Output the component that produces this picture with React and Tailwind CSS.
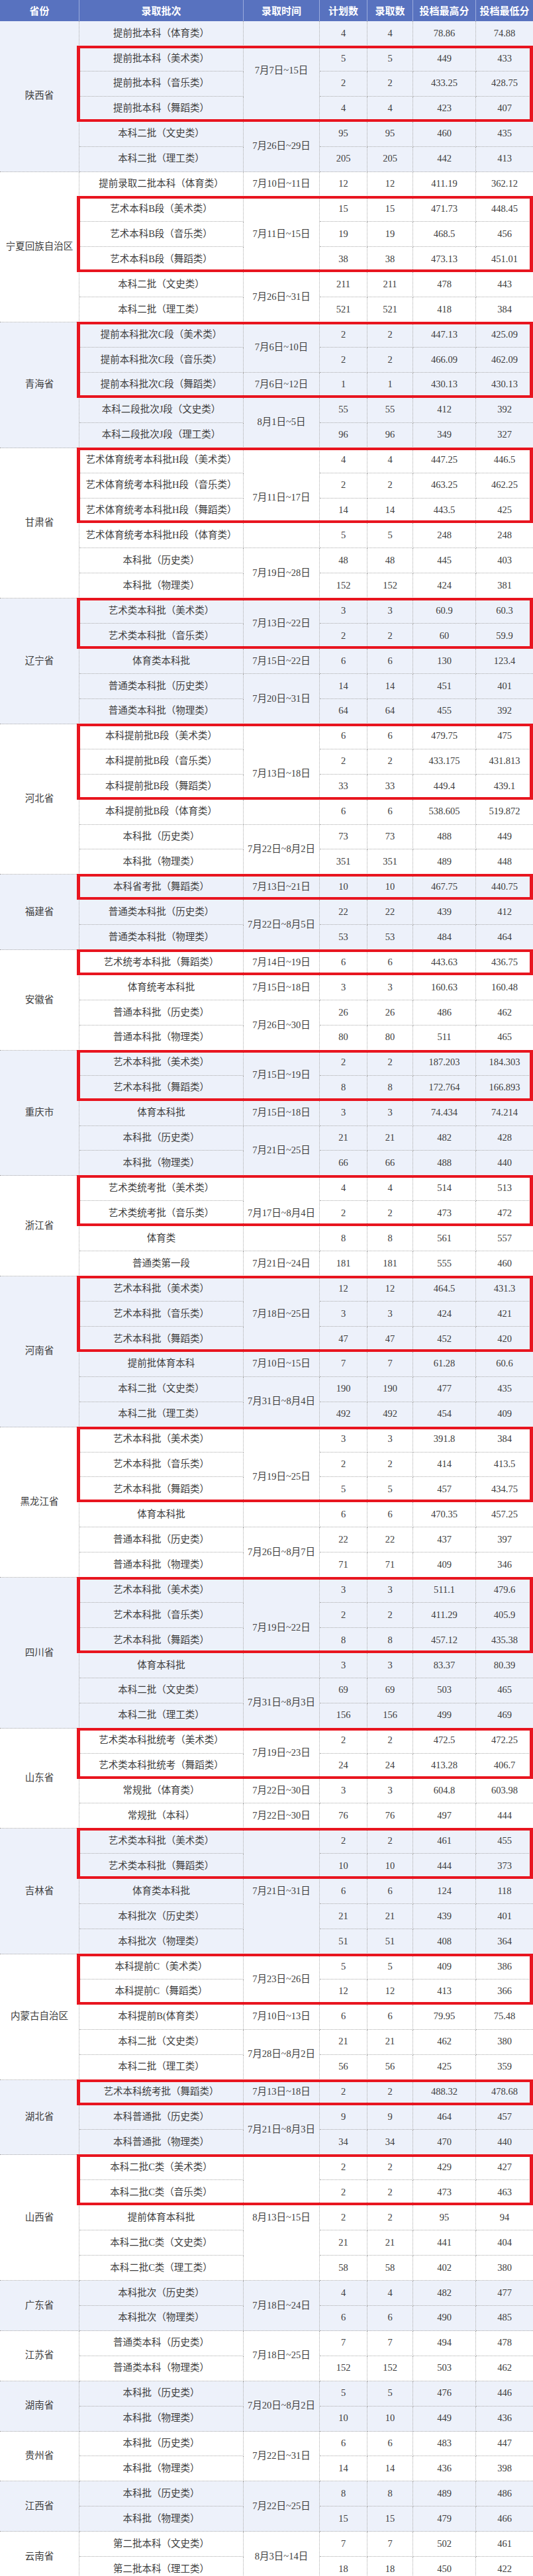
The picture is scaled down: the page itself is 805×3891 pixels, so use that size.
import React from 'react';

const groups = [
  {
    name: '陕西省',
    rows: [
      ['提前批本科（体育类）', '4', '4', '78.86', '74.88'],
      ['提前批本科（美术类）', '5', '5', '449', '433'],
      ['提前批本科（音乐类）', '2', '2', '433.25', '428.75'],
      ['提前批本科（舞蹈类）', '4', '4', '423', '407'],
      ['本科二批（文史类）', '95', '95', '460', '435'],
      ['本科二批（理工类）', '205', '205', '442', '413'],
    ],
    times: [['7月7日~15日', 4], ['7月26日~29日', 2]],
    boxes: [[1, 3]],
  },
  {
    name: '宁夏回族自治区',
    rows: [
      ['提前录取二批本科（体育类）', '12', '12', '411.19', '362.12'],
      ['艺术本科B段（美术类）', '15', '15', '471.73', '448.45'],
      ['艺术本科B段（音乐类）', '19', '19', '468.5', '456'],
      ['艺术本科B段（舞蹈类）', '38', '38', '473.13', '451.01'],
      ['本科二批（文史类）', '211', '211', '478', '443'],
      ['本科二批（理工类）', '521', '521', '418', '384'],
    ],
    times: [['7月10日~11日', 1], ['7月11日~15日', 3], ['7月26日~31日', 2]],
    boxes: [[1, 3]],
  },
  {
    name: '青海省',
    rows: [
      ['提前本科批次C段（美术类）', '2', '2', '447.13', '425.09'],
      ['提前本科批次C段（音乐类）', '2', '2', '466.09', '462.09'],
      ['提前本科批次C段（舞蹈类）', '1', '1', '430.13', '430.13'],
      ['本科二段批次J段（文史类）', '55', '55', '412', '392'],
      ['本科二段批次J段（理工类）', '96', '96', '349', '327'],
    ],
    times: [['7月6日~10日', 2], ['7月6日~12日', 1], ['8月1日~5日', 2]],
    boxes: [[0, 3]],
  },
  {
    name: '甘肃省',
    rows: [
      ['艺术体育统考本科批H段（美术类）', '4', '4', '447.25', '446.5'],
      ['艺术体育统考本科批H段（音乐类）', '2', '2', '463.25', '462.25'],
      ['艺术体育统考本科批H段（舞蹈类）', '14', '14', '443.5', '425'],
      ['艺术体育统考本科批H段（体育类）', '5', '5', '248', '248'],
      ['本科批（历史类）', '48', '48', '445', '403'],
      ['本科批（物理类）', '152', '152', '424', '381'],
    ],
    times: [['7月11日~17日', 4], ['7月19日~28日', 2]],
    boxes: [[0, 3]],
  },
  {
    name: '辽宁省',
    rows: [
      ['艺术类本科批（美术类）', '3', '3', '60.9', '60.3'],
      ['艺术类本科批（音乐类）', '2', '2', '60', '59.9'],
      ['体育类本科批', '6', '6', '130', '123.4'],
      ['普通类本科批（历史类）', '14', '14', '451', '401'],
      ['普通类本科批（物理类）', '64', '64', '455', '392'],
    ],
    times: [['7月13日~22日', 2], ['7月15日~22日', 1], ['7月20日~31日', 2]],
    boxes: [[0, 2]],
  },
  {
    name: '河北省',
    rows: [
      ['本科提前批B段（美术类）', '6', '6', '479.75', '475'],
      ['本科提前批B段（音乐类）', '2', '2', '433.175', '431.813'],
      ['本科提前批B段（舞蹈类）', '33', '33', '449.4', '439.1'],
      ['本科提前批B段（体育类）', '6', '6', '538.605', '519.872'],
      ['本科批（历史类）', '73', '73', '488', '449'],
      ['本科批（物理类）', '351', '351', '489', '448'],
    ],
    times: [['7月13日~18日', 4], ['7月22日~8月2日', 2]],
    boxes: [[0, 3]],
  },
  {
    name: '福建省',
    rows: [
      ['本科省考批（舞蹈类）', '10', '10', '467.75', '440.75'],
      ['普通类本科批（历史类）', '22', '22', '439', '412'],
      ['普通类本科批（物理类）', '53', '53', '484', '464'],
    ],
    times: [['7月13日~21日', 1], ['7月22日~8月5日', 2]],
    boxes: [[0, 1]],
  },
  {
    name: '安徽省',
    rows: [
      ['艺术统考本科批（舞蹈类）', '6', '6', '443.63', '436.75'],
      ['体育统考本科批', '3', '3', '160.63', '160.48'],
      ['普通本科批（历史类）', '26', '26', '486', '462'],
      ['普通本科批（物理类）', '80', '80', '511', '465'],
    ],
    times: [['7月14日~19日', 1], ['7月15日~18日', 1], ['7月26日~30日', 2]],
    boxes: [[0, 1]],
  },
  {
    name: '重庆市',
    rows: [
      ['艺术本科批（美术类）', '2', '2', '187.203', '184.303'],
      ['艺术本科批（舞蹈类）', '8', '8', '172.764', '166.893'],
      ['体育本科批', '3', '3', '74.434', '74.214'],
      ['本科批（历史类）', '21', '21', '482', '428'],
      ['本科批（物理类）', '66', '66', '488', '440'],
    ],
    times: [['7月15日~19日', 2], ['7月15日~18日', 1], ['7月21日~25日', 2]],
    boxes: [[0, 2]],
  },
  {
    name: '浙江省',
    rows: [
      ['艺术类统考批（美术类）', '4', '4', '514', '513'],
      ['艺术类统考批（音乐类）', '2', '2', '473', '472'],
      ['体育类', '8', '8', '561', '557'],
      ['普通类第一段', '181', '181', '555', '460'],
    ],
    times: [['7月17日~8月4日', 3], ['7月21日~24日', 1]],
    boxes: [[0, 2]],
  },
  {
    name: '河南省',
    rows: [
      ['艺术本科批（美术类）', '12', '12', '464.5', '431.3'],
      ['艺术本科批（音乐类）', '3', '3', '424', '421'],
      ['艺术本科批（舞蹈类）', '47', '47', '452', '420'],
      ['提前批体育本科', '7', '7', '61.28', '60.6'],
      ['本科二批（文史类）', '190', '190', '477', '435'],
      ['本科二批（理工类）', '492', '492', '454', '409'],
    ],
    times: [['7月18日~25日', 3], ['7月10日~15日', 1], ['7月31日~8月4日', 2]],
    boxes: [[0, 3]],
  },
  {
    name: '黑龙江省',
    rows: [
      ['艺术本科批（美术类）', '3', '3', '391.8', '384'],
      ['艺术本科批（音乐类）', '2', '2', '414', '413.5'],
      ['艺术本科批（舞蹈类）', '5', '5', '457', '434.75'],
      ['体育本科批', '6', '6', '470.35', '457.25'],
      ['普通本科批（历史类）', '22', '22', '437', '397'],
      ['普通本科批（物理类）', '71', '71', '409', '346'],
    ],
    times: [['7月19日~25日', 4], ['7月26日~8月7日', 2]],
    boxes: [[0, 3]],
  },
  {
    name: '四川省',
    rows: [
      ['艺术本科批（美术类）', '3', '3', '511.1', '479.6'],
      ['艺术本科批（音乐类）', '2', '2', '411.29', '405.9'],
      ['艺术本科批（舞蹈类）', '8', '8', '457.12', '435.38'],
      ['体育本科批', '3', '3', '83.37', '80.39'],
      ['本科二批（文史类）', '69', '69', '503', '465'],
      ['本科二批（理工类）', '156', '156', '499', '469'],
    ],
    times: [['7月19日~22日', 4], ['7月31日~8月3日', 2]],
    boxes: [[0, 3]],
  },
  {
    name: '山东省',
    rows: [
      ['艺术类本科批统考（美术类）', '2', '2', '472.5', '472.25'],
      ['艺术类本科批统考（舞蹈类）', '24', '24', '413.28', '406.7'],
      ['常规批（体育类）', '3', '3', '604.8', '603.98'],
      ['常规批（本科）', '76', '76', '497', '444'],
    ],
    times: [['7月19日~23日', 2], ['7月22日~30日', 1], ['7月22日~30日', 1]],
    boxes: [[0, 2]],
  },
  {
    name: '吉林省',
    rows: [
      ['艺术类本科批（美术类）', '2', '2', '461', '455'],
      ['艺术类本科批（舞蹈类）', '10', '10', '444', '373'],
      ['体育类本科批', '6', '6', '124', '118'],
      ['本科批次（历史类）', '21', '21', '439', '401'],
      ['本科批次（物理类）', '51', '51', '408', '364'],
    ],
    times: [['7月21日~31日', 5]],
    boxes: [[0, 2]],
  },
  {
    name: '内蒙古自治区',
    rows: [
      ['本科提前C（美术类）', '5', '5', '409', '386'],
      ['本科提前C（舞蹈类）', '12', '12', '413', '366'],
      ['本科提前B(体育类）', '6', '6', '79.95', '75.48'],
      ['本科二批（文史类）', '21', '21', '462', '380'],
      ['本科二批（理工类）', '56', '56', '425', '359'],
    ],
    times: [['7月23日~26日', 2], ['7月10日~13日', 1], ['7月28日~8月2日', 2]],
    boxes: [[0, 2]],
  },
  {
    name: '湖北省',
    rows: [
      ['艺术本科统考批（舞蹈类）', '2', '2', '488.32', '478.68'],
      ['本科普通批（历史类）', '9', '9', '464', '457'],
      ['本科普通批（物理类）', '34', '34', '470', '440'],
    ],
    times: [['7月13日~18日', 1], ['7月21日~8月3日', 2]],
    boxes: [[0, 1]],
  },
  {
    name: '山西省',
    rows: [
      ['本科二批C类（美术类）', '2', '2', '429', '427'],
      ['本科二批C类（音乐类）', '2', '2', '473', '463'],
      ['提前体育本科批', '2', '2', '95', '94'],
      ['本科二批C类（文史类）', '21', '21', '441', '404'],
      ['本科二批C类（理工类）', '58', '58', '402', '380'],
    ],
    times: [['8月13日~15日', 5]],
    boxes: [[0, 2]],
  },
  {
    name: '广东省',
    rows: [
      ['本科批次（历史类）', '4', '4', '482', '477'],
      ['本科批次（物理类）', '6', '6', '490', '485'],
    ],
    times: [['7月18日~24日', 2]],
    boxes: [],
  },
  {
    name: '江苏省',
    rows: [
      ['普通类本科（历史类）', '7', '7', '494', '478'],
      ['普通类本科（物理类）', '152', '152', '503', '462'],
    ],
    times: [['7月18日~25日', 2]],
    boxes: [],
  },
  {
    name: '湖南省',
    rows: [
      ['本科批（历史类）', '5', '5', '476', '446'],
      ['本科批（物理类）', '10', '10', '449', '436'],
    ],
    times: [['7月20日~8月2日', 2]],
    boxes: [],
  },
  {
    name: '贵州省',
    rows: [
      ['本科批（历史类）', '6', '6', '483', '447'],
      ['本科批（物理类）', '14', '14', '436', '398'],
    ],
    times: [['7月22日~31日', 2]],
    boxes: [],
  },
  {
    name: '江西省',
    rows: [
      ['本科批（历史类）', '8', '8', '489', '486'],
      ['本科批（物理类）', '15', '15', '479', '466'],
    ],
    times: [['7月22日~25日', 2]],
    boxes: [],
  },
  {
    name: '云南省',
    rows: [
      ['第二批本科（文史类）', '7', '7', '502', '461'],
      ['第二批本科（理工类）', '18', '18', '450', '422'],
    ],
    times: [['8月3日~14日', 2]],
    boxes: [],
  },
];

const headers = ['省份', '录取批次', '录取时间', '计划数', '录取数', '投档最高分', '投档最低分'];

function Cell({ col, row, span = 1, className = '', children }) {
  return (
    <div
      className={`flex items-center justify-center whitespace-nowrap ${className}`}
      style={{ gridColumn: col, gridRow: `${row} / span ${span}` }}
    >
      {children}
    </div>
  );
}

export default function App() {
  const cells = [];
  const boxes = [];
  let row = 2; // grid row 1 is the header

  groups.forEach((g, gi) => {
    const bg = gi % 2 === 0 ? 'bg-[#edf1fa]' : 'bg-white';
    const line = 'border-b border-r border-dotted border-[#ababab]';

    cells.push(
      <Cell key={`p${gi}`} col={1} row={row} span={g.rows.length} className={`${bg} ${line}`}>
        {g.name}
      </Cell>
    );

    g.rows.forEach((r, ri) => {
      const y = row + ri;
      cells.push(
        <Cell key={`b${gi}-${ri}`} col={2} row={y} className={`${bg} ${line}`}>{r[0]}</Cell>,
        <Cell key={`c${gi}-${ri}`} col={4} row={y} className={`${bg} ${line}`}>{r[1]}</Cell>,
        <Cell key={`d${gi}-${ri}`} col={5} row={y} className={`${bg} ${line}`}>{r[2]}</Cell>,
        <Cell key={`e${gi}-${ri}`} col={6} row={y} className={`${bg} ${line}`}>{r[3]}</Cell>,
        <Cell key={`f${gi}-${ri}`} col={7} row={y} className={`${bg} border-b border-dotted border-[#ababab]`}>{r[4]}</Cell>
      );
    });

    let t = row;
    g.times.forEach(([label, span], ti) => {
      cells.push(
        <Cell key={`t${gi}-${ti}`} col={3} row={t} span={span} className={`${bg} ${line}`}>
          {label}
        </Cell>
      );
      t += span;
    });

    g.boxes.forEach(([start, n], bi) => {
      boxes.push(
        <div
          key={`x${gi}-${bi}`}
          className="pointer-events-none z-10 -ml-[4px] -mt-[1px] border-x-[5px] border-y-[4px] border-[#e8151f]"
          style={{ gridColumn: '2 / 8', gridRow: `${row + start} / span ${n}` }}
        />
      );
    });

    row += g.rows.length;
  });

  return (
    <div className="w-[805px] bg-white font-['Liberation_Serif','Noto_Sans_CJK_SC',serif] text-[14.5px] text-[#3d3d3d]">
      <div className="grid grid-cols-[120px_248px_115px_72px_69px_95px_86px] grid-rows-[32px_repeat(102,37.93px)]">
        {headers.map((h, i) => (
          <Cell
            key={h}
            col={i + 1}
            row={1}
            className={`bg-[#5872bf] font-['Noto_Sans_CJK_SC',sans-serif] text-[15px] font-bold text-white ${i < 6 ? 'border-r border-[#9aabdc]' : ''}`}
          >
            {h}
          </Cell>
        ))}
        {cells}
        {boxes}
      </div>
    </div>
  );
}
